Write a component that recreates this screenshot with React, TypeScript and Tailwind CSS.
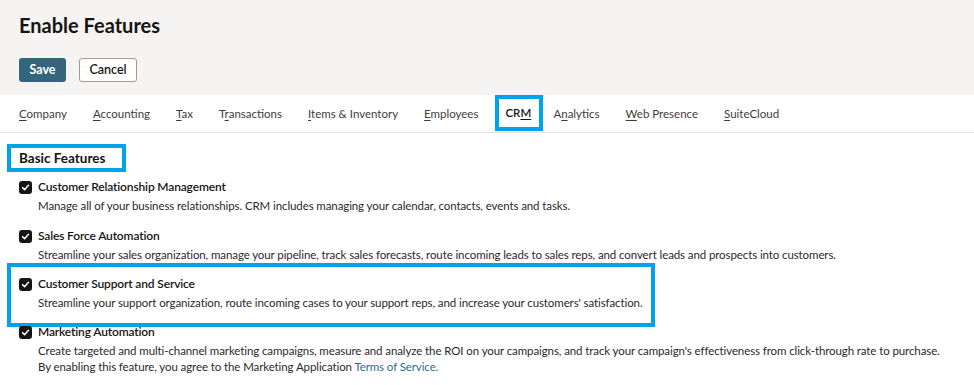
import React from "react";

const tabs: { label: string; u: number }[] = [
  { label: "Company", u: 0 },
  { label: "Accounting", u: 0 },
  { label: "Tax", u: 0 },
  { label: "Transactions", u: 1 },
  { label: "Items & Inventory", u: 0 },
  { label: "Employees", u: 0 },
  { label: "CRM", u: 2 },
  { label: "Analytics", u: 1 },
  { label: "Web Presence", u: 0 },
  { label: "SuiteCloud", u: 0 },
];

function Label({ label, u }: { label: string; u: number }) {
  return (
    <>
      {label.slice(0, u)}
      <span className="underline underline-offset-2">{label[u]}</span>
      {label.slice(u + 1)}
    </>
  );
}

function Check() {
  return (
    <span className="flex h-[13px] w-[13px] shrink-0 items-center justify-center rounded-[3px] bg-[#161513]">
      <svg width="9" height="9" viewBox="0 0 10 10" fill="none">
        <path d="M1.8 5.2 L4 7.4 L8.3 2.6" stroke="white" strokeWidth="1.7" strokeLinecap="round" strokeLinejoin="round" />
      </svg>
    </span>
  );
}

function Feature({ title, children }: { title: string; children: React.ReactNode }) {
  return (
    <div className="flex flex-col">
      <div className="flex h-[18px] items-center gap-[6px]">
        <Check />
        <span className="text-[12px] font-semibold tracking-[-0.15px] text-[#161513]">{title}</span>
      </div>
      <div className="mt-[2px] whitespace-nowrap pl-[19px] text-[11.5px] leading-[16px] tracking-[-0.1px] text-[#2b2a28]">
        {children}
      </div>
    </div>
  );
}

export default function App() {
  return (
    <div className="h-[385px] w-[974px] overflow-hidden bg-white" style={{ fontFamily: "Lato, 'Noto Sans', sans-serif" }}>
      <div className="h-[95px] bg-[#f5f4f2] px-[19px] pt-[13px]">
        <h1 className="text-[20px] font-bold leading-[24px] text-[#161513]">Enable Features</h1>
        <div className="mt-[21px] flex gap-[13px]">
          <button className="h-[24px] w-[47px] rounded-[3px] bg-[#33667c] text-[12.5px] font-bold text-white">Save</button>
          <button className="h-[24px] w-[58px] rounded-[3px] border border-[#9e9a95] bg-white text-[12.5px] font-semibold text-[#161513]">
            Cancel
          </button>
        </div>
      </div>
      <div className="flex h-[38px] items-center border-b border-[#e4e2df] pl-[19px]">
        {tabs.map((t) =>
          t.label === "CRM" ? (
            <div
              key={t.label}
              className="-ml-[9px] mr-[10px] flex h-[36px] w-[48px] items-center self-start border-[4px] border-[#00a2e8] pl-[6px] text-[11.5px] font-semibold text-[#161513]"
            >
              <Label label={t.label} u={t.u} />
            </div>
          ) : (
            <div key={t.label} className="mr-[26px] text-[11.5px] text-[#3f3c39]">
              <Label label={t.label} u={t.u} />
            </div>
          )
        )}
      </div>
      <div className="px-[7px] pt-[11px]">
        <div className="flex h-[28px] w-[119px] items-center border-[4px] border-[#00a2e8] pl-[8px] text-[13.5px] font-bold text-[#161513]">
          Basic Features
        </div>
        <div className="flex flex-col gap-[13px] pl-[12px] pt-[6px]">
          <Feature title="Customer Relationship Management">
            Manage all of your business relationships. CRM includes managing your calendar, contacts, events and tasks.
          </Feature>
          <Feature title="Sales Force Automation">
            Streamline your sales organization, manage your pipeline, track sales forecasts, route incoming leads to sales reps, and convert leads and
            prospects into customers.
          </Feature>
        </div>
        <div className="w-[648px] border-[4px] border-[#00a2e8] pb-[12px] pl-[8px] pt-[8px]">
          <Feature title="Customer Support and Service">
            Streamline your support organization, route incoming cases to your support reps, and increase your customers' satisfaction.
          </Feature>
        </div>
        <div className="-mt-[4px] pl-[12px]">
          <Feature title="Marketing Automation">
            Create targeted and multi-channel marketing campaigns, measure and analyze the ROI on your campaigns, and track your campaign's
            effectiveness from click-through rate to purchase.
            <br />
            By enabling this feature, you agree to the Marketing Application <span className="text-[#1e6f8e]">Terms of Service.</span>
          </Feature>
        </div>
      </div>
    </div>
  );
}
